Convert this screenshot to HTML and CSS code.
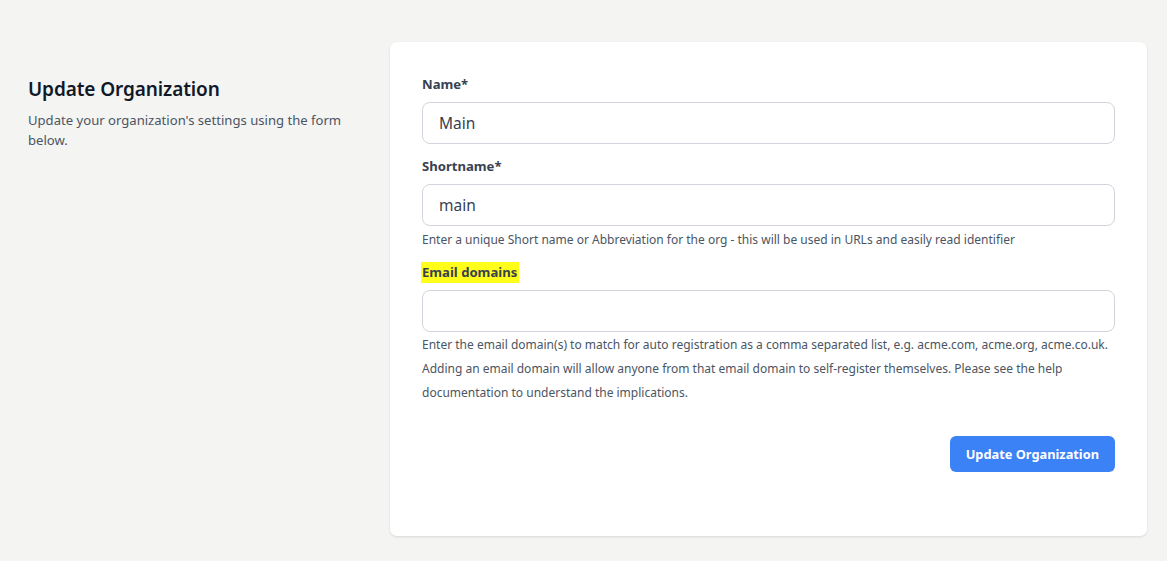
FILE: index.html
```html
<!DOCTYPE html>
<html lang="en">
<head>
<meta charset="utf-8">
<title>Update Organization</title>
<link rel="stylesheet" href="styles.css">
</head>
<body>
<div class="page">
  <div class="intro">
    <h1 class="title">Update Organization</h1>
    <p class="desc">Update your organization's settings using the form below.</p>
  </div>
  <form class="card">
    <div class="field">
      <label class="label">Name*</label>
      <input class="input" type="text" value="Main">
    </div>
    <div class="field">
      <label class="label">Shortname*</label>
      <input class="input" type="text" value="main">
      <p class="help">Enter a unique Short name or Abbreviation for the org - this will be used in URLs and easily read identifier</p>
    </div>
    <div class="field">
      <label class="label"><span class="mark">Email domains</span></label>
      <input class="input" type="text" value="">
      <p class="help help-lg">Enter the email domain(s) to match for auto registration as a comma separated list, e.g. acme.com, acme.org, acme.co.uk. Adding an email domain will allow anyone from that email domain to self-register themselves. Please see the help documentation to understand the implications.</p>
    </div>
    <div class="actions">
      <button class="btn" type="button">Update Organization</button>
    </div>
  </form>
</div>
</body>
</html>
```
FILE: styles.css
```css
* { box-sizing: border-box; }
html, body { margin: 0; padding: 0; }
body {
  background: #f4f4f3;
  font-family: "Noto Sans", "Open Sans", sans-serif;
  color: #374151;
  width: 1167px;
  height: 561px;
  overflow: hidden;
}
.page {
  display: grid;
  grid-template-columns: 330px 757px;
  column-gap: 32px;
  padding: 42px 20px 0 28px;
}
.intro { padding-top: 33px; }
.title {
  margin: 0;
  font-size: 19px;
  line-height: 28px;
  font-weight: 600;
  color: #111827;
  letter-spacing: -0.1px;
}
.desc {
  margin: 7px 0 0;
  font-size: 13.1px;
  line-height: 20px;
  color: #4b5563;
}
.card {
  background: #fff;
  border-radius: 7px;
  box-shadow: 0 1px 3px rgba(0,0,0,0.08), 0 1px 2px rgba(0,0,0,0.04);
  padding: 32px 32px 64px;
  display: flex;
  flex-direction: column;
  height: 494px;
}
.field { display: flex; flex-direction: column; margin-bottom: 12px; }
.label {
  font-size: 13.1px;
  line-height: 20px;
  font-weight: 700;
  color: #374151;
  margin-bottom: 8px;
}
.mark {
  background: #ffff1a;
  padding: 1px 2px 2px 1px;
  margin-left: -1px;
}
.input {
  height: 42px;
  border: 1px solid #d1d5db;
  border-radius: 8px;
  padding: 0 16px;
  font-family: inherit;
  font-size: 15.5px;
  color: #374151;
  background: #fff;
  outline: none;
}
.help {
  margin: 4px 0 0;
  font-size: 12px;
  line-height: 20px;
  color: #4b5563;
}
.help-lg { line-height: 24px; margin-top: 1px; }
.actions {
  display: flex;
  justify-content: flex-end;
  margin-top: 19px;
}
.btn {
  height: 36px;
  padding: 0 16px;
  border: none;
  border-radius: 6px;
  background: #3b82f6;
  color: #fff;
  font-family: inherit;
  font-size: 12.8px;
  font-weight: 700;
}
```
